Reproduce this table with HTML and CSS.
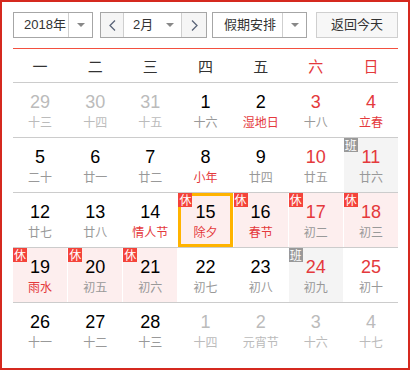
FILE: index.html
```html
<!DOCTYPE html>
<html lang="zh-CN">
<head>
<meta charset="utf-8">
<title>万年历</title>
<link rel="stylesheet" href="styles.css">
</head>
<body>
<div class="cal">
  <div class="toolbar">
    <div class="select year">
      <span class="sel-text">2018年</span>
      <span class="sel-arrow"><i class="tri"></i></span>
    </div>
    <div class="month-group">
      <span class="nav"><svg width="7" height="11" viewBox="0 0 7 11"><polyline points="6,0.5 1,5.5 6,10.5" fill="none" stroke="#5a6478" stroke-width="1.3"/></svg></span>
      <span class="month-sel"><span class="sel-text">2月</span><i class="tri"></i></span>
      <span class="nav"><svg width="7" height="11" viewBox="0 0 7 11"><polyline points="1,0.5 6,5.5 1,10.5" fill="none" stroke="#5a6478" stroke-width="1.3"/></svg></span>
    </div>
    <div class="select holiday">
      <span class="sel-text">假期安排</span>
      <span class="sel-arrow"><i class="tri"></i></span>
    </div>
    <div class="today-btn">返回今天</div>
  </div>
  <div class="redline"></div>
  <div class="weekhead">
    <span>一</span><span>二</span><span>三</span><span>四</span><span>五</span><span class="we">六</span><span class="we">日</span>
  </div>
  <div class="week">
    <div class="day other"><b>29</b><em>十三</em></div>
    <div class="day other"><b>30</b><em>十四</em></div>
    <div class="day other"><b>31</b><em>十五</em></div>
    <div class="day"><b>1</b><em>十六</em></div>
    <div class="day"><b>2</b><em class="fest">湿地日</em></div>
    <div class="day wkend"><b>3</b><em>十八</em></div>
    <div class="day wkend"><b>4</b><em class="fest">立春</em></div>
  </div>
  <div class="week">
    <div class="day"><b>5</b><em>二十</em></div>
    <div class="day"><b>6</b><em>廿一</em></div>
    <div class="day"><b>7</b><em>廿二</em></div>
    <div class="day"><b>8</b><em class="fest">小年</em></div>
    <div class="day"><b>9</b><em>廿四</em></div>
    <div class="day wkend"><b>10</b><em>廿五</em></div>
    <div class="day wkend work"><span class="badge ban">班</span><b>11</b><em>廿六</em></div>
  </div>
  <div class="week">
    <div class="day"><b>12</b><em>廿七</em></div>
    <div class="day"><b>13</b><em>廿八</em></div>
    <div class="day"><b>14</b><em class="fest">情人节</em></div>
    <div class="day rest today"><span class="badge">休</span><b>15</b><em class="fest">除夕</em></div>
    <div class="day rest"><span class="badge">休</span><b>16</b><em class="fest">春节</em></div>
    <div class="day rest wkend"><span class="badge">休</span><b>17</b><em>初二</em></div>
    <div class="day rest wkend"><span class="badge">休</span><b>18</b><em>初三</em></div>
  </div>
  <div class="week">
    <div class="day rest"><span class="badge">休</span><b>19</b><em class="fest">雨水</em></div>
    <div class="day rest"><span class="badge">休</span><b>20</b><em>初五</em></div>
    <div class="day rest"><span class="badge">休</span><b>21</b><em>初六</em></div>
    <div class="day"><b>22</b><em>初七</em></div>
    <div class="day"><b>23</b><em>初八</em></div>
    <div class="day wkend work"><span class="badge ban">班</span><b>24</b><em>初九</em></div>
    <div class="day wkend"><b>25</b><em>初十</em></div>
  </div>
  <div class="week last">
    <div class="day"><b>26</b><em>十一</em></div>
    <div class="day"><b>27</b><em>十二</em></div>
    <div class="day"><b>28</b><em>十三</em></div>
    <div class="day other"><b>1</b><em>十四</em></div>
    <div class="day other"><b>2</b><em>元宵节</em></div>
    <div class="day other"><b>3</b><em>十六</em></div>
    <div class="day other"><b>4</b><em>十七</em></div>
  </div>
</div>
</body>
</html>
```

FILE: styles.css
```css
html, body {
  margin: 0;
  padding: 0;
  background: #fff;
}
body {
  font-family: "Liberation Sans", Arial, "Noto Sans CJK SC", sans-serif;
  color: #333;
}
.cal {
  box-sizing: border-box;
  width: 410px;
  height: 370px;
  border: 2px solid #d5291f;
  padding: 10px 10px 0 11px;
}
.toolbar {
  display: flex;
  height: 26px;
  font-size: 13px;
}
.select {
  box-sizing: border-box;
  display: flex;
  height: 26px;
  border: 1px solid #a6a6a6;
  background: #fff;
}
.sel-text {
  flex: 1;
  line-height: 24px;
  color: #333;
  white-space: nowrap;
}
.sel-arrow {
  width: 23px;
  border-left: 1px solid #cfcfcf;
  display: flex;
  align-items: center;
  justify-content: center;
}
.tri {
  width: 0;
  height: 0;
  border-left: 4px solid transparent;
  border-right: 4px solid transparent;
  border-top: 4px solid #888;
}
.year {
  width: 80px;
  margin-right: 7px;
}
.year .sel-text {
  padding-left: 10px;
}
.month-group {
  box-sizing: border-box;
  display: flex;
  width: 107px;
  height: 26px;
  border: 1px solid #a6a6a6;
  margin-right: 5px;
}
.nav {
  width: 22px;
  background: #f5f5f5;
  display: flex;
  align-items: center;
  justify-content: center;
}
.nav:first-child {
  border-right: 1px solid #cfcfcf;
}
.nav:last-child {
  border-left: 1px solid #cfcfcf;
  width: 24px;
}
.month-sel {
  flex: 1;
  display: flex;
  align-items: center;
  padding-left: 9px;
  padding-right: 7px;
  background: #fff;
}
.holiday {
  width: 95px;
}
.holiday .sel-text {
  padding-left: 11px;
}
.today-btn {
  box-sizing: border-box;
  margin-left: auto;
  width: 82px;
  height: 26px;
  border: 1px solid #cfcfcf;
  background: #f7f7f7;
  text-align: center;
  line-height: 24px;
  color: #333;
}
.redline {
  margin-top: 10px;
  height: 1px;
  background: #f3503f;
}
.weekhead {
  display: grid;
  grid-template-columns: repeat(7, 1fr);
  column-gap: 1px;
  height: 33px;
  border-bottom: 1px solid #cccccc;
  font-family: "Noto Sans CJK SC", sans-serif;
  font-size: 15px;
  line-height: 33px;
  text-align: center;
  color: #333;
}
.weekhead .we {
  color: #e4393c;
}
.week {
  display: grid;
  grid-template-columns: repeat(7, 1fr);
  column-gap: 1px;
  height: 54px;
  border-bottom: 1px solid #cccccc;
}
.week.last {
  border-bottom: none;
}
.day {
  position: relative;
  box-sizing: border-box;
  padding-top: 9px;
  text-align: center;
}
.day b {
  display: block;
  font-weight: normal;
  font-size: 18px;
  line-height: 20px;
  color: #000;
}
.day em {
  display: block;
  font-style: normal;
  font-size: 12px;
  line-height: 20px;
  color: #999;
  font-family: "Noto Sans CJK SC", sans-serif;
}
.day em.fest {
  color: #e4393c;
}
.day.wkend b {
  color: #e4393c;
}
.day.other b {
  color: #bbbbbb;
}
.day.other em {
  color: #bbbbbb;
}
.day.rest {
  background: #fdeeee;
}
.day.work {
  background: #f4f4f4;
}
.day.today {
  border: 3px solid #ffb300;
  padding-top: 6px;
}
.badge {
  position: absolute;
  top: 0;
  left: 0;
  width: 14px;
  height: 14px;
  background: #f4433a;
  color: #fff;
  font-size: 12px;
  line-height: 14px;
  text-align: center;
  font-family: "Noto Sans CJK SC", sans-serif;
}
.day.today .badge {
  top: -3px;
  left: -3px;
}
.badge.ban {
  background: #999;
}
```
